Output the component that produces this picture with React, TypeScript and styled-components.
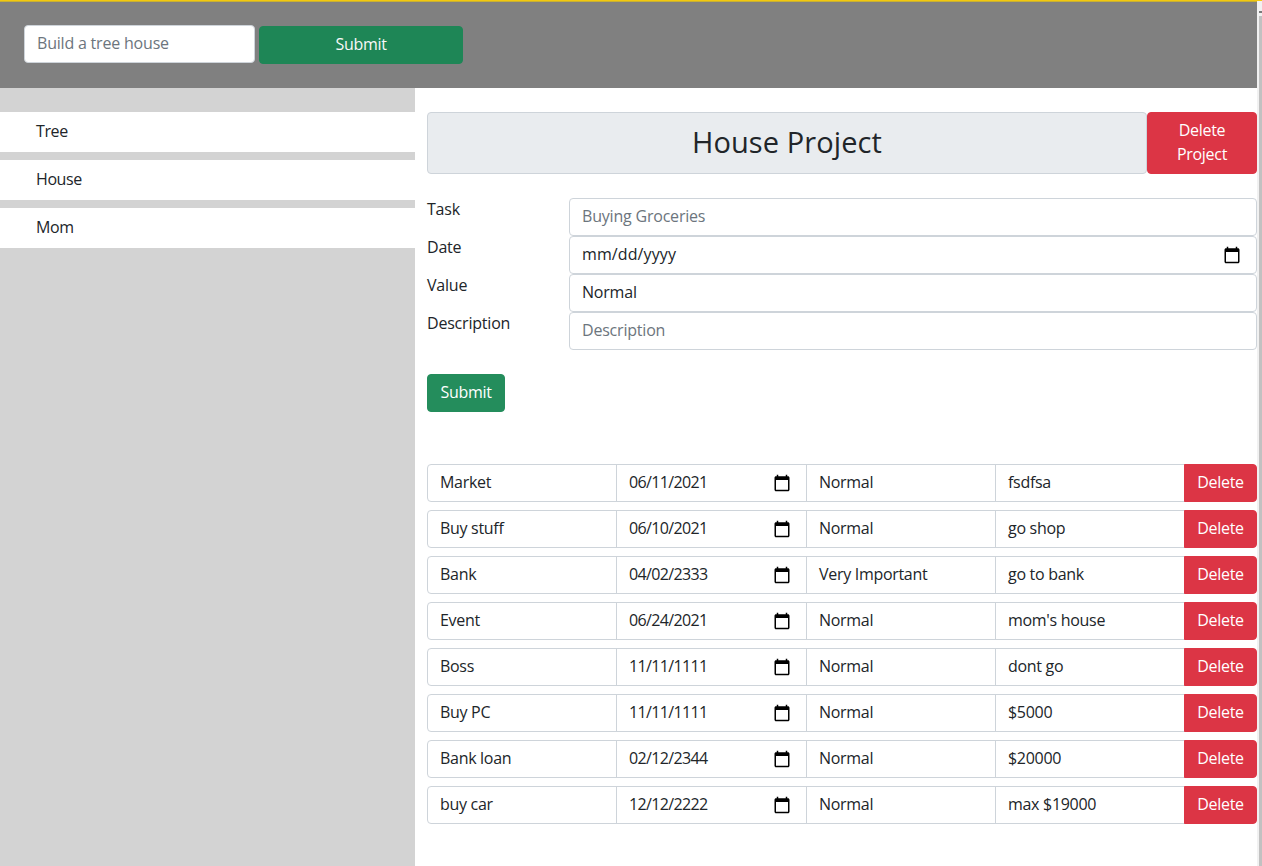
import React from "react";
import styled, { createGlobalStyle } from "styled-components";

const font = `"Open Sans", "Noto Sans", Roboto, sans-serif`;

const Global = createGlobalStyle`
  html, body { margin: 0; padding: 0; height: 100%; overflow: hidden; background: #fff; }
  * { box-sizing: border-box; }
  body { font-family: ${font}; font-size: 16px; color: #212529; }
  input::placeholder { color: #6c757d; opacity: 1; }
`;

const Page = styled.div`
  display: flex;
  width: 1262px;
  height: 866px;
  border-top: 1px solid #f2c80f;
`;
const Main = styled.div`
  width: 1257px;
  flex: none;
  display: flex;
  flex-direction: column;
`;
const Scrollbar = styled.div`
  width: 5px;
  flex: none;
  background: #f1f1f1;
  padding: 10px 0 0 2px;
  display: flex;
  flex-direction: column;
`;
const ScrollArrow = styled.div`
  height: 2px;
  flex: none;
  background: #7a7a7a;
`;
const ScrollThumb = styled.div`
  flex: 1;
  margin-top: 3px;
  background: #c1c1c1;
`;
const Header = styled.header`
  height: 87px;
  flex: none;
  background: #808080;
  border-top: 1px solid #c9b032;
  display: flex;
  align-items: flex-start;
  padding: 23px 24px 0;
  gap: 4px;
`;
const Field = styled.input<{ $w?: number }>`
  height: 38px;
  width: ${(p) => (p.$w ? `${p.$w}px` : "100%")};
  padding: 5px 12px 7px;
  border: 1px solid #ced4da;
  border-radius: 4px;
  font: 400 16px/24px ${font};
  letter-spacing: -0.2px;
  color: #212529;
  background: #fff;
  outline: none;
`;
const Green = styled.button<{ $w: number }>`
  height: 38px;
  width: ${(p) => p.$w}px;
  background: #198754;
  opacity: 0.95;
  border: 1px solid #198754;
  border-radius: 4px;
  color: #fff;
  font: 400 16px/24px ${font};
  letter-spacing: -0.3px;
  padding: 0 0 2px;
`;
const HeaderSubmit = styled(Green)`
  margin-top: 1px;
`;
const Body = styled.div`
  flex: 1;
  display: flex;
  min-height: 0;
`;
const Sidebar = styled.nav`
  width: 415px;
  flex: none;
  background: #d3d3d3;
  padding-top: 24px;
  display: flex;
  flex-direction: column;
  gap: 8px;
`;
const SideItem = styled.div`
  height: 40px;
  background: #fff;
  padding: 7px 36px 9px;
  line-height: 24px;
  letter-spacing: -0.4px;
`;
const Content = styled.main`
  flex: 1;
  min-width: 0;
  padding: 24px 0 0 12px;
  display: flex;
  flex-direction: column;
`;
const TitleRow = styled.div`
  display: flex;
  height: 62px;
`;
const Title = styled.h1`
  flex: 1;
  margin: 0;
  padding-bottom: 2px;
  background: #e9ecef;
  border: 1px solid #ced4da;
  border-radius: 4px;
  display: flex;
  align-items: center;
  justify-content: center;
  font: 400 29px/34px ${font};
  letter-spacing: 0.1px;
`;
const DeleteProject = styled.button`
  width: 110px;
  flex: none;
  background: #dc3545;
  border: 1px solid #dc3545;
  border-radius: 4px;
  color: #fff;
  font: 400 16px/24px ${font};
  letter-spacing: -0.3px;
  padding: 5px 12px 7px;
`;
const FormGrid = styled.form`
  margin-top: 24px;
  display: grid;
  grid-template-columns: 142px 1fr;
  grid-auto-rows: 38px;
`;
const Label = styled.label`
  line-height: 24px;
  letter-spacing: -0.2px;
  margin-top: -1px;
`;
const DateBox = styled.div`
  height: 38px;
  padding: 5px 12px 7px;
  display: flex;
  align-items: center;
  justify-content: space-between;
  line-height: 24px;
  background: #fff;
`;
const FormDate = styled(DateBox)`
  border: 1px solid #ced4da;
  border-radius: 4px;
  letter-spacing: 0.1px;
`;
const SubmitWrap = styled.div`
  margin-top: 24px;
`;
const Rows = styled.div`
  margin-top: 52px;
  display: flex;
  flex-direction: column;
  gap: 8px;
`;
const Row = styled.div`
  display: grid;
  grid-template-columns: 190px 190px 189px 189px 72px;
  height: 38px;
`;
const Cell = styled.div<{ $first?: boolean }>`
  height: 38px;
  padding: 5px 12px 7px;
  border: 1px solid #ced4da;
  margin-left: ${(p) => (p.$first ? "0" : "-1px")};
  border-radius: ${(p) => (p.$first ? "4px 0 0 4px" : "0")};
  line-height: 24px;
  letter-spacing: -0.3px;
  white-space: nowrap;
  background: #fff;
`;
const CellDate = styled(DateBox)`
  border: 1px solid #ced4da;
  margin-left: -1px;
  letter-spacing: -0.65px;
`;
const RowDelete = styled.button`
  height: 38px;
  margin-left: -1px;
  background: #dc3545;
  border: 1px solid #dc3545;
  border-radius: 0 4px 4px 0;
  color: #fff;
  font: 400 16px/24px ${font};
  letter-spacing: -0.3px;
  padding: 0 0 2px;
`;
const CalSvg = styled.svg`
  width: 18px;
  height: 18px;
  flex: none;
  margin: 2px 3px 0 0;
`;

const Cal = () => (
  <CalSvg viewBox="0 0 24 24">
    <path
      fill="#000"
      d="M20 3h-1V1h-2v2H7V1H5v2H4c-1.1 0-2 .9-2 2v16c0 1.1.9 2 2 2h16c1.1 0 2-.9 2-2V5c0-1.1-.9-2-2-2zm0 18H4V8h16v13z"
    />
  </CalSvg>
);

const rows = [
  ["Market", "06/11/2021", "Normal", "fsdfsa"],
  ["Buy stuff", "06/10/2021", "Normal", "go shop"],
  ["Bank", "04/02/2333", "Very Important", "go to bank"],
  ["Event", "06/24/2021", "Normal", "mom's house"],
  ["Boss", "11/11/1111", "Normal", "dont go"],
  ["Buy PC", "11/11/1111", "Normal", "$5000"],
  ["Bank loan", "02/12/2344", "Normal", "$20000"],
  ["buy car", "12/12/2222", "Normal", "max $19000"],
];

export default function App() {
  return (
    <Page>
      <Global />
      <Main>
        <Header>
          <Field $w={231} placeholder="Build a tree house" />
          <HeaderSubmit $w={204}>Submit</HeaderSubmit>
        </Header>
        <Body>
          <Sidebar>
            <SideItem>Tree</SideItem>
            <SideItem>House</SideItem>
            <SideItem>Mom</SideItem>
          </Sidebar>
          <Content>
            <TitleRow>
              <Title>House Project</Title>
              <DeleteProject>Delete Project</DeleteProject>
            </TitleRow>
            <FormGrid>
              <Label>Task</Label>
              <Field placeholder="Buying Groceries" />
              <Label>Date</Label>
              <FormDate>
                mm/dd/yyyy
                <Cal />
              </FormDate>
              <Label>Value</Label>
              <Field defaultValue="Normal" />
              <Label>Description</Label>
              <Field placeholder="Description" />
            </FormGrid>
            <SubmitWrap>
              <Green $w={78}>Submit</Green>
            </SubmitWrap>
            <Rows>
              {rows.map((r) => (
                <Row key={r[0]}>
                  <Cell $first>{r[0]}</Cell>
                  <CellDate>
                    {r[1]}
                    <Cal />
                  </CellDate>
                  <Cell>{r[2]}</Cell>
                  <Cell>{r[3]}</Cell>
                  <RowDelete>Delete</RowDelete>
                </Row>
              ))}
            </Rows>
          </Content>
        </Body>
      </Main>
      <Scrollbar>
        <ScrollArrow />
        <ScrollThumb />
      </Scrollbar>
    </Page>
  );
}
